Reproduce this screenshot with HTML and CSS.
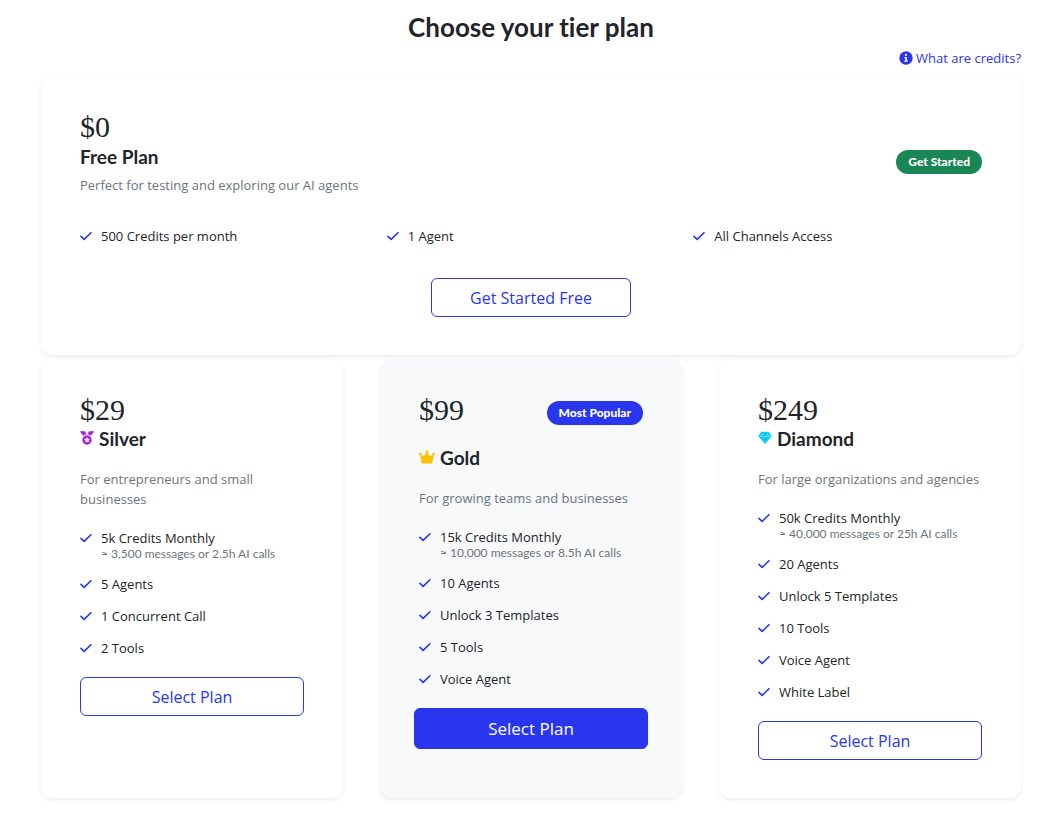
FILE: index.html
```html
<!DOCTYPE html>
<html lang="en">
<head>
<meta charset="utf-8">
<meta name="viewport" content="width=device-width, initial-scale=1">
<title>Choose your tier plan</title>
<link rel="stylesheet" href="styles.css">
</head>
<body>
<svg class="sprite" aria-hidden="true">
  <symbol id="check" viewBox="0 0 12 12"><path d="M1 6.4 4.1 9.4 11 2.7" fill="none" stroke="currentColor" stroke-width="1.6" stroke-linecap="round" stroke-linejoin="round"/></symbol>
  <symbol id="info" viewBox="0 0 14 14"><circle cx="7" cy="7" r="6.7" fill="currentColor"/><circle cx="7" cy="3.9" r="1.1" fill="#fff"/><path d="M5.4 6.1h2.4v3.5h.9v1.1H5.3V9.6h.9V7.2h-.8z" fill="#fff"/></symbol>
  <symbol id="medal" viewBox="0 0 14 14"><path d="M.6.2h3.9q.4 0 .6.4l1.2 2.6a5 5 0 0 0-3 1.5L.2 1Q-.1.2.6.2zM13.4.2H9.5q-.4 0-.6.4L7.7 3.2a5 5 0 0 1 3 1.5L13.8 1q.3-.8-.4-.8z" fill="currentColor"/><circle cx="7" cy="9" r="4.7" fill="currentColor"/><path d="m7 6 .9 1.8 2.1.3-1.5 1.5.3 2L7 10.7l-1.8.9.3-2L4 8.100l2.100-.3z" fill="#fff"/></symbol>
  <symbol id="crown" viewBox="0 0 16 14"><path d="M2.500 12.800 1.300 5.200A1.200 1.200 0 1 1 2.400 4.400L5 6.200 7.200 2.700a1.300 1.300 0 1 1 1.600 0L11 6.200l2.600-1.800a1.200 1.200 0 1 1 1.100.8l-1.200 7.600q-.1.700-.8.700H3.300q-.7 0-.8-.7z" fill="currentColor"/></symbol>
  <symbol id="gem" viewBox="0 0 14 14"><path d="M3.100.8h7.800L13.800 5 7 13 .2 5z" fill="currentColor"/><path d="M1.500 5 7 5.500 12.500 5M4.500 2.300 3.800 4.900M9.500 2.300l.7 2.600" fill="none" stroke="#fff" stroke-width=".7" opacity=".6"/></symbol>
</svg>

<main class="page">
  <h1 class="page-title">Choose your tier plan</h1>
  <div class="help">
    <a class="help-link" href="#credits"><svg class="icon"><use href="#info"/></svg>What are credits?</a>
  </div>

  <section class="card free">
    <div class="free-head">
      <div>
        <p class="price">$0</p>
        <h2 class="name free-name">Free Plan</h2>
        <p class="desc">Perfect for testing and exploring our AI agents</p>
      </div>
      <span class="badge badge-green">Get Started</span>
    </div>
    <ul class="features free-features">
      <li><svg class="check"><use href="#check"/></svg>500 Credits per month</li>
      <li><svg class="check"><use href="#check"/></svg>1 Agent</li>
      <li><svg class="check"><use href="#check"/></svg>All Channels Access</li>
    </ul>
    <button class="btn free-btn" type="button">Get Started Free</button>
  </section>

  <div class="plans">
    <section class="card plan">
      <p class="price">$29</p>
      <h2 class="name"><svg class="icon silver"><use href="#medal"/></svg>Silver</h2>
      <p class="desc">For entrepreneurs and small businesses</p>
      <ul class="features">
        <li><svg class="check"><use href="#check"/></svg><span>5k Credits Monthly<small>≈ 3,500 messages or 2.5h AI calls</small></span></li>
        <li><svg class="check"><use href="#check"/></svg>5 Agents</li>
        <li><svg class="check"><use href="#check"/></svg>1 Concurrent Call</li>
        <li><svg class="check"><use href="#check"/></svg>2 Tools</li>
      </ul>
      <button class="btn" type="button">Select Plan</button>
    </section>

    <section class="card plan featured">
      <div class="price-row">
        <p class="price">$99</p>
        <span class="badge badge-blue">Most Popular</span>
      </div>
      <h2 class="name"><svg class="icon gold"><use href="#crown"/></svg>Gold</h2>
      <p class="desc">For growing teams and businesses</p>
      <ul class="features">
        <li><svg class="check"><use href="#check"/></svg><span>15k Credits Monthly<small>≈ 10,000 messages or 8.5h AI calls</small></span></li>
        <li><svg class="check"><use href="#check"/></svg>10 Agents</li>
        <li><svg class="check"><use href="#check"/></svg>Unlock 3 Templates</li>
        <li><svg class="check"><use href="#check"/></svg>5 Tools</li>
        <li><svg class="check"><use href="#check"/></svg>Voice Agent</li>
      </ul>
      <button class="btn btn-solid" type="button">Select Plan</button>
    </section>

    <section class="card plan">
      <p class="price">$249</p>
      <h2 class="name"><svg class="icon diamond"><use href="#gem"/></svg>Diamond</h2>
      <p class="desc">For large organizations and agencies</p>
      <ul class="features">
        <li><svg class="check"><use href="#check"/></svg><span>50k Credits Monthly<small>≈ 40,000 messages or 25h AI calls</small></span></li>
        <li><svg class="check"><use href="#check"/></svg>20 Agents</li>
        <li><svg class="check"><use href="#check"/></svg>Unlock 5 Templates</li>
        <li><svg class="check"><use href="#check"/></svg>10 Tools</li>
        <li><svg class="check"><use href="#check"/></svg>Voice Agent</li>
        <li><svg class="check"><use href="#check"/></svg>White Label</li>
      </ul>
      <button class="btn" type="button">Select Plan</button>
    </section>
  </div>
</main>
</body>
</html>
```
FILE: styles.css
```css
* {
  box-sizing: border-box;
}

body {
  margin: 0;
  background: #fff;
  color: #212529;
  font: 13px/20px "Open Sans", "Noto Sans", sans-serif;
}

h1,
h2,
p,
ul {
  margin: 0;
  padding: 0;
}

.sprite {
  display: none;
}

.page {
  padding: 11px 42px 18px 41px;
}

.page-title {
  font: 700 26px/32px Lato, sans-serif;
  font-variant-ligatures: none;
  text-align: center;
}

.help {
  display: flex;
  justify-content: flex-end;
  padding: 5px 0 6px;
}

.help-link {
  display: flex;
  align-items: center;
  gap: 3px;
  color: #2a35ee;
  text-decoration: none;
}

.icon {
  width: 14px;
  height: 14px;
  flex: none;
}

.card {
  padding: 38px 39px;
  border-radius: 12px;
  background: #fff;
  box-shadow: 0 2px 4px rgba(0, 0, 0, 0.075);
}

.free-head {
  display: flex;
  align-items: center;
  justify-content: space-between;
}

.price {
  font: 400 30px/30px "Liberation Serif", serif;
}

.name {
  display: flex;
  align-items: center;
  gap: 5px;
  font: 700 19px/28px Lato, sans-serif;
}

.name .icon {
  margin-bottom: 3px;
}

.free-name {
  padding: 1px 0 4px;
}

.desc {
  color: #6c757d;
}

.free .desc {
  padding-bottom: 16px;
}

.badge {
  padding: 0 12px;
  border-radius: 12px;
  color: #fff;
  font: 900 12px/24px Lato, sans-serif;
}

.badge-green {
  background: #198754;
}

.badge-blue {
  background: #2a35ee;
}

.features {
  list-style: none;
  display: grid;
  gap: 14px;
  line-height: 18px;
}

.features li {
  display: flex;
  align-items: flex-start;
  gap: 9px;
}

.features small {
  display: block;
  color: #6c757d;
  font: 12px/14px Lato, sans-serif;
}

.check {
  width: 12px;
  height: 18px;
  flex: none;
  color: #2a35ee;
}

.free-features {
  grid-template-columns: repeat(3, 1fr);
  gap: 18px;
  padding: 16px 0 33px;
}

.btn {
  display: block;
  width: 100%;
  height: 39px;
  padding: 0 12px;
  border: 1px solid #2a35ee;
  border-radius: 6px;
  background: transparent;
  color: #2a35ee;
  font: 16px/24px "Open Sans", "Noto Sans", sans-serif;
  cursor: pointer;
}

.free-btn {
  width: fit-content;
  margin: 0 auto;
  padding: 0 38px;
}

.plans {
  display: grid;
  grid-template-columns: repeat(3, 1fr);
  gap: 37px;
  margin-top: 4px;
}

.plan {
  padding-top: 36px;
}

.plan .desc {
  padding: 16px 0 20px;
}

.plan .features {
  margin-bottom: 20px;
}

.featured {
  display: flex;
  flex-direction: column;
  background: #f8f9fb;
}

.price-row {
  display: flex;
  align-items: flex-end;
  justify-content: space-between;
  margin-bottom: 19px;
}

.featured .icon {
  width: 16px;
}

.btn-solid {
  width: auto;
  height: 41px;
  margin: 0 -5px;
  background: #2a35ee;
  color: #fff;
  font-size: 17px;
  font-weight: 500;
}

.silver {
  color: #a51fdc;
}

.gold {
  color: #ffc107;
}

.diamond {
  color: #0dcaf0;
}
```
